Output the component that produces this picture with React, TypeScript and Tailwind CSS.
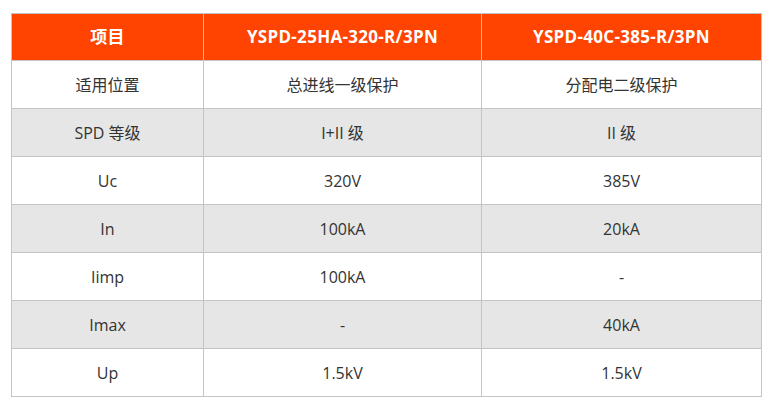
import React from "react";

const rows: [string, string, string][] = [
  ["适用位置", "总进线一级保护", "分配电二级保护"],
  ["SPD 等级", "I+II 级", "II 级"],
  ["Uc", "320V", "385V"],
  ["In", "100kA", "20kA"],
  ["Iimp", "100kA", "-"],
  ["Imax", "-", "40kA"],
  ["Up", "1.5kV", "1.5kV"],
];

const App: React.FC = () => {
  return (
    <div
      className="w-[774px] h-[406px] bg-white pl-[11px] pt-[13px]"
      style={{ fontFamily: '"Open Sans", "Noto Sans CJK SC", sans-serif' }}
    >
      <table className="border-collapse table-fixed w-[750px] text-[16px] text-[#333]">
        <colgroup>
          <col className="w-[192px]" />
          <col className="w-[278px]" />
          <col className="w-[280px]" />
        </colgroup>
        <thead>
          <tr className="h-[47px] bg-[#ff4300] text-white font-bold text-[17px] tracking-[0.3px]">
            <th className="border border-[#c4c4c4] text-center">项目</th>
            <th className="border border-[#c4c4c4] text-center">YSPD-25HA-320-R/3PN</th>
            <th className="border border-[#c4c4c4] text-center">YSPD-40C-385-R/3PN</th>
          </tr>
        </thead>
        <tbody>
          {rows.map((row, idx) => (
            <tr
              key={idx}
              className={`h-[48px] ${idx % 2 === 1 ? "bg-[#e6e6e6]" : "bg-white"}`}
            >
              {row.map((cell, i) => (
                <td key={i} className="border border-[#c4c4c4] text-center">
                  {cell}
                </td>
              ))}
            </tr>
          ))}
        </tbody>
      </table>
    </div>
  );
};

export default App;
